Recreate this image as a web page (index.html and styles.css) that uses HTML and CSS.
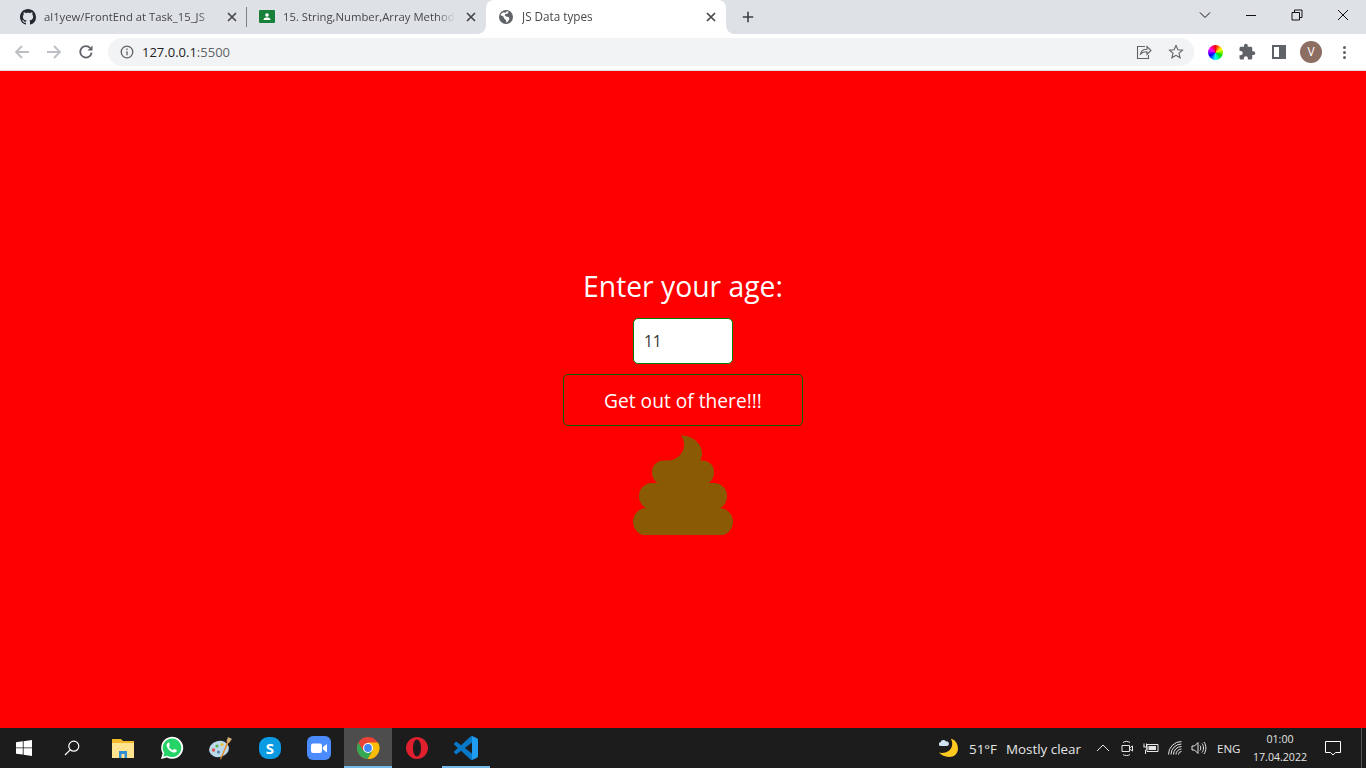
FILE: index.html
```html
<!DOCTYPE html>
<html lang="en">
<head>
    <meta charset="UTF-8">
    <meta name="viewport" content="width=device-width, initial-scale=1.0">
    <title>JS Data types</title>
    <link rel="stylesheet" href="styles.css">
</head>
<body>
    <!-- Tab strip -->
    <div class="tabstrip">
        <div class="tab">
            <svg class="favicon" viewBox="0 0 16 16"><path fill="#24292f" d="M8 0C3.58 0 0 3.58 0 8c0 3.54 2.29 6.53 5.47 7.59.4.07.55-.17.55-.38 0-.19-.01-.82-.01-1.49-2.01.37-2.53-.49-2.69-.94-.09-.23-.48-.94-.82-1.13-.28-.15-.68-.52-.01-.53.63-.01 1.08.58 1.23.82.72 1.21 1.87.87 2.33.66.07-.52.28-.87.51-1.07-1.78-.2-3.64-.89-3.64-3.95 0-.87.31-1.59.82-2.15-.08-.2-.36-1.02.08-2.12 0 0 .67-.21 2.2.82.64-.18 1.32-.27 2-.27.68 0 1.36.09 2 .27 1.53-1.04 2.2-.82 2.2-.82.44 1.1.16 1.92.08 2.12.51.56.82 1.27.82 2.15 0 3.07-1.87 3.75-3.65 3.95.29.25.54.73.54 1.48 0 1.07-.01 1.93-.01 2.2 0 .21.15.46.55.38A8.013 8.013 0 0016 8c0-4.42-3.58-8-8-8z"/></svg>
            <span class="tab-title">al1yew/FrontEnd at Task_15_JS</span>
            <svg class="tab-close" viewBox="0 0 16 16"><path d="M4 4l8 8M12 4l-8 8"/></svg>
        </div>
        <div class="tab-sep"></div>
        <div class="tab">
            <svg class="favicon" viewBox="0 0 16 16"><rect y="1" width="16" height="13" rx="1" fill="#188038"/><circle cx="8" cy="6" r="1.8" fill="#fff"/><path fill="#fff" d="M4.5 11c0-1.8 1.6-2.4 3.5-2.4s3.5.6 3.5 2.4z"/></svg>
            <span class="tab-title">15. String,Number,Array Methods</span>
            <svg class="tab-close" viewBox="0 0 16 16"><path d="M4 4l8 8M12 4l-8 8"/></svg>
        </div>
        <div class="tab tab-active">
            <svg class="favicon favicon-small" viewBox="0 0 16 16"><circle cx="8" cy="8" r="8" fill="#5f6368"/><path fill="#fff" d="M2 4.5l3-2 2.5.5L9 1.5l2 .5-1 2-2.5.5L6.5 6 8 7.5l3 .5 1 2-2 3.5-1.5 1-.5-3-2-1.5-1-2.5L2 6z"/></svg>
            <span class="tab-title">JS Data types</span>
            <svg class="tab-close" viewBox="0 0 16 16"><path d="M4 4l8 8M12 4l-8 8"/></svg>
        </div>
        <svg class="new-tab" viewBox="0 0 16 16"><path d="M8 2v12M2 8h12"/></svg>
        <div class="window-controls">
            <div class="win-btn win-btn-list"><svg viewBox="0 0 12 12"><path d="M1 3.5l5 5 5-5"/></svg></div>
            <div class="win-btn"><svg viewBox="0 0 12 12"><path d="M1 6.5h10"/></svg></div>
            <div class="win-btn"><svg viewBox="0 0 12 12"><path d="M1 3.5h7.5V11H1zM3.5 3.5V1H11v7.5H8.5"/></svg></div>
            <div class="win-btn"><svg viewBox="0 0 12 12"><path d="M1 1l10 10M11 1L1 11"/></svg></div>
        </div>
    </div>

    <!-- Toolbar -->
    <div class="toolbar">
        <svg class="nav-icon nav-off" viewBox="0 0 16 16"><path d="M15 8H2M8 2L2 8l6 6"/></svg>
        <svg class="nav-icon nav-off" viewBox="0 0 16 16"><path d="M1 8h13M8 2l6 6-6 6"/></svg>
        <svg class="nav-icon" viewBox="0 0 16 16"><path d="M13.6 8.6a5.7 5.7 0 1 1-1.4-4.6"/><path class="solid" d="M14.5 1.5v5h-5z"/></svg>
        <div class="omnibox">
            <svg class="info-icon" viewBox="0 0 14 14"><circle cx="7" cy="7" r="5.8"/><path d="M7 6.2v4M7 3.6v1.5"/></svg>
            <span class="url">127.0.0.1<span class="url-port">:5500</span></span>
            <svg class="omni-icon" viewBox="0 0 16 16"><path d="M9 2.5H1.500v12h11V11"/><path d="M4.500 10c.5-3 3-4.800 6.500-4.800V2.500l4 4-4 4V7.800c-2.500 0-5 .7-6.500 2.200z"/></svg>
            <svg class="omni-icon" viewBox="0 0 16 16"><path d="M8 1.500l1.900 4.300 4.600.4-3.500 3 1.100 4.600L8 11.400 3.900 13.800 5 9.200l-3.500-3 4.600-.4z"/></svg>
        </div>
        <div class="wheel"></div>
        <svg class="puzzle" viewBox="0 0 24 24"><path d="M20.500 11H19V7c0-1.100-.9-2-2-2h-4V3.500C13 2.120 11.880 1 10.500 1S8 2.120 8 3.500V5H4c-1.100 0-1.990.9-1.990 2v3.800H3.500c1.490 0 2.700 1.210 2.700 2.700s-1.210 2.700-2.700 2.700H2V20c0 1.100.9 2 2 2h3.800v-1.500c0-1.490 1.210-2.700 2.700-2.700 1.490 0 2.700 1.210 2.700 2.700V22H17c1.100 0 2-.9 2-2v-4h1.500c1.380 0 2.500-1.120 2.500-2.500S21.880 11 20.500 11z"/></svg>
        <div class="side-panel"><span></span></div>
        <div class="avatar">V</div>
        <div class="menu-dots"><span></span><span></span><span></span></div>
    </div>

    <main class="page">
        <h1 class="age-title">Enter your age:</h1>
        <input class="age-input" type="text" value="11">
        <button class="age-button" type="button">Get out of there!!!</button>
        <svg class="poo" viewBox="0 0 100 100">
            <rect x="0" y="73" width="100" height="27.500" rx="13.700"/>
            <rect x="6" y="48" width="88" height="26.500" rx="13"/>
            <rect x="19" y="25.500" width="62" height="24" rx="11.500"/>
            <path d="M48 .5C60 .5 69 9 69 18c0 3-.7 5.500-2 8H33.500C43 25.700 51 19 51 10c0-3.500-1-6.500-3-9.500z"/>
        </svg>
    </main>

    <!-- Windows taskbar -->
    <div class="taskbar">
        <div class="task-start">
            <svg viewBox="0 0 16 16" class="win-logo"><path d="M0 2.300l6.800-1v6.200H0zM7.600 1.200L16 0v7.500H7.600zM0 8.300h6.800v6.300L0 13.700zM7.600 8.300H16V16l-8.400-1.200z"/></svg>
        </div>
        <div class="task-start">
            <svg viewBox="0 0 16 16" class="search-icon"><circle cx="9.800" cy="6.200" r="5"/><path d="M6.200 9.800L1 15"/></svg>
        </div>
        <div class="task-apps">
            <div class="app"><svg viewBox="0 0 24 24"><path fill="#f2b92b" d="M1 3h9l2 2h11v17H1z"/><path fill="#ffe38f" d="M1 7h22v15H1z"/><path fill="#2f8ed6" d="M8 15h8v7h-2.500v-4h-3v4H8z"/></svg></div>
            <div class="app"><svg viewBox="0 0 24 24"><path fill="#fff" d="M1 23l1.600-5.800A11 11 0 1 1 7 21.500z"/><path fill="#25d366" d="M3.300 20.700l1-3.700A9.300 9.300 0 1 1 7.300 19.800z"/><path fill="#fff" d="M8.600 6.600c-.4 0-1 .2-1.400.9-.8 1.300-.7 2.900.5 4.700 1.400 2.100 3 3.500 5.300 4.200 1.500.5 2.900 0 3.500-1 .3-.5.300-1.100.2-1.300l-2.300-1.200c-.2-.1-.4 0-.5.100l-.8 1c-.2.2-.3.200-.6.100-1.500-.7-2.700-1.800-3.500-3.200-.1-.2 0-.4.100-.5l.6-.8c.1-.2.1-.3 0-.5L9.300 7c-.2-.4-.4-.4-.7-.4z"/></svg></div>
            <div class="app"><svg viewBox="0 0 24 24"><ellipse cx="10" cy="13" rx="10" ry="8" transform="rotate(-15 10 13)" fill="#bcd9ea"/><circle cx="4.500" cy="14" r="1.700" fill="#e0504a"/><circle cx="8" cy="10" r="1.600" fill="#58b04c"/><circle cx="13" cy="8.500" r="1.600" fill="#e8c02c"/><circle cx="9.500" cy="16" r="1.500" fill="#4f7fa8"/><path fill="#e38a2c" d="M18.500 5l1.500 1-8 17.500-1-.5z"/><path fill="#d8b070" d="M19 1l4 2-3 4-2.500-1.500z"/></svg></div>
            <div class="app"><svg viewBox="0 0 24 24"><rect x="1" y="1" width="22" height="22" rx="9" fill="#0b9be3"/><text class="skype-s" x="12" y="17.500" text-anchor="middle">S</text></svg></div>
            <div class="app"><svg viewBox="0 0 24 24"><rect width="24" height="24" rx="6" fill="#4a8cff"/><rect x="4" y="7.500" width="11" height="9.500" rx="2" fill="#fff"/><path fill="#fff" d="M16 11l4-3v8.500l-4-3z"/></svg></div>
            <div class="app app-active app-running"><svg viewBox="0 0 24 24"><circle cx="12" cy="12" r="11" fill="#ea4335"/><path fill="#fbbc04" d="M12 6.500h10a11 11 0 0 1-10.500 16.500l5-8.500z"/><path fill="#34a853" d="M2.400 6.500A11 11 0 0 0 11.500 23l5-8.500H7.200z"/><circle cx="12" cy="12" r="5" fill="#fff"/><circle cx="12" cy="12" r="3.900" fill="#4285f4"/></svg></div>
            <div class="app"><svg viewBox="0 0 24 24"><path fill-rule="evenodd" fill="#e0202e" d="M12 1c6 0 11 5 11 11s-5 11-11 11S1 18 1 12 6 1 12 1zm0 2.500c-2.400 0-4 3.800-4 8.500s1.600 8.500 4 8.500 4-3.800 4-8.500-1.600-8.500-4-8.500z"/></svg></div>
            <div class="app app-running"><svg viewBox="0 0 24 24"><path fill="#0a78c9" d="M23.150 2.587L18.210.21a1.494 1.494 0 0 0-1.705.29l-9.460 8.630-4.120-3.128a.999.999 0 0 0-1.276.057L.327 7.261A1 1 0 0 0 .326 8.740L3.899 12 .326 15.260a1 1 0 0 0 .001 1.479L1.650 17.940a.999.999 0 0 0 1.276.057l4.120-3.128 9.460 8.630a1.492 1.492 0 0 0 1.704.29l4.942-2.377A1.500 1.500 0 0 0 24 20.060V3.939a1.500 1.500 0 0 0-.85-1.352zm-5.146 14.861L10.826 12l7.178-5.448v10.896z"/><path fill="#1f9cf0" d="M18 0l5.150 2.587A1.500 1.500 0 0 1 24 3.939V20.060a1.500 1.500 0 0 1-.85 1.352L18 24z"/></svg></div>
        </div>
        <div class="tray">
            <svg class="moon" viewBox="0 0 24 24"><path fill="#ffc91f" d="M12.800 1.900C18 3 20.700 7.500 20.700 12.800c0 5.200-4.200 9-9.800 9-4.400 0-8.400-1.800-10.900-4.800 7 1.500 13-2 14.200-7.500.6-3 0-5.500-1.400-7.600z"/><path fill="#cfe3f5" d="M1.800 9.800a2 2 0 0 1-.2-4 3.300 3.300 0 0 1 6-1 2.600 2.600 0 0 1 1.400 5z"/></svg>
            <span class="temp">51°F</span>
            <span class="weather">Mostly clear</span>
            <div class="tray-icon"><svg viewBox="0 0 16 16"><path d="M2 11l6-6 6 6"/></svg></div>
            <div class="tray-icon"><svg viewBox="0 0 16 16"><path d="M3 5.500h7.500v6H3zM10.500 8l3-2v5l-3-2M4 2.500c2-1.500 5-1.500 7 0M4 14.500c2 1.500 5 1.500 7 0"/></svg></div>
            <div class="tray-icon"><svg viewBox="0 0 16 16"><path d="M4 4.500h11v7H4zM1 7V3.500M3.500 7V3.500M.5 7h3.500v2L2.500 10v4"/><path class="solid" d="M5.500 6h7.500v4H5.500z"/></svg></div>
            <div class="tray-icon"><svg viewBox="0 0 16 16"><path d="M1.500 14.500a13 13 0 0 1 13-13M4 14.500a10.500 10.500 0 0 1 10.500-10.500M6.500 14.500a8 8 0 0 1 8-8M9 14.500a5.500 5.500 0 0 1 5.500-5.500M11.500 14.500a3 3 0 0 1 3-3"/></svg></div>
            <div class="tray-icon"><svg viewBox="0 0 16 16"><path d="M1 6h2.500L7 2.500v11L3.500 10H1zM9 5.500c1 1.500 1 3.500 0 5M11 3.500c2 2.500 2 6.500 0 9M13 2c2.500 3.500 2.500 8.500 0 12"/></svg></div>
            <span class="lang">ENG</span>
            <div class="clock"><span>01:00</span><span>17.04.2022</span></div>
            <div class="notify"><svg viewBox="0 0 18 18"><path d="M1.500 2.500h15v11h-5L9 16l-2.500-2.500h-5z"/></svg></div>
            <div class="show-desktop"></div>
        </div>
    </div>
</body>
</html>
```

FILE: styles.css
```css
* {
    box-sizing: border-box;
}

body {
    margin: 0;
    height: 100vh;
    display: flex;
    flex-direction: column;
    overflow: hidden;
    font-family: "Open Sans", "Liberation Sans", sans-serif;
    background-color: #f00;
}

svg {
    display: block;
    flex: none;
}

/* tab strip */
.tabstrip {
    height: 34px;
    padding-left: 8px;
    display: flex;
    align-items: center;
    background-color: #dee1e6;
}

.tab {
    width: 239px;
    height: 34px;
    padding: 0 7px 0 12px;
    display: flex;
    align-items: center;
    gap: 8px;
    flex: none;
}

.tab-active {
    position: relative;
    width: 240px;
    padding-left: 13px;
    background-color: #fff;
    border-radius: 8px 8px 0 0;
}

/* little curves where the active tab meets the toolbar */
.tab-active::before,
.tab-active::after {
    content: "";
    position: absolute;
    bottom: 0;
    width: 8px;
    height: 8px;
}

.tab-active::before {
    left: -8px;
    background: radial-gradient(circle at 0 0, #dee1e6 7.5px, #fff 8px);
}

.tab-active::after {
    right: -8px;
    background: radial-gradient(circle at 100% 0, #dee1e6 7.5px, #fff 8px);
}

.favicon {
    width: 16px;
    height: 16px;
}

.favicon-small {
    width: 14px;
    height: 14px;
    margin-right: 1px;
}

.tab-title {
    flex: 1;
    padding-bottom: 2px;
    overflow: hidden;
    white-space: nowrap;
    font-size: 11.3px;
    color: #45474a;
    -webkit-mask-image: linear-gradient(to left, transparent 0, #000 18px);
    mask-image: linear-gradient(to left, transparent 0, #000 18px);
}

.tab-active .tab-title {
    font-size: 11.7px;
}

.tab-close {
    width: 16px;
    height: 16px;
    fill: none;
    stroke: #45474a;
    stroke-width: 1.7;
}

.tab-sep {
    width: 1px;
    height: 20px;
    margin-left: -1px;
    background-color: #7f8388;
    flex: none;
}

.new-tab {
    width: 14px;
    height: 14px;
    margin-left: 15px;
    fill: none;
    stroke: #3c4043;
    stroke-width: 1.800;
}

.window-controls {
    margin-left: auto;
    display: flex;
    align-self: flex-start;
}

.win-btn {
    width: 46px;
    height: 29px;
    display: flex;
    align-items: center;
    justify-content: center;
}

.win-btn svg {
    width: 12px;
    height: 12px;
    fill: none;
    stroke: #111;
    stroke-width: 1;
}

/* toolbar */
.toolbar {
    height: 37px;
    padding: 0 12px 0 14px;
    display: flex;
    align-items: center;
    background-color: #fff;
    border-bottom: 1px solid #dadce0;
}

.nav-icon {
    width: 16px;
    height: 16px;
    margin-right: 16px;
    fill: none;
    stroke: #5f6368;
    stroke-width: 1.800;
}

.nav-off {
    stroke: #bcbfc3;
}

.solid {
    fill: currentColor;
    stroke: none;
}

.nav-icon .solid {
    fill: #5f6368;
}

.omnibox {
    width: 1086px;
    height: 28px;
    margin-left: -2px;
    padding: 0 10px 0 12px;
    display: flex;
    align-items: center;
    flex: none;
    border-radius: 14px;
    background-color: #f1f3f4;
}

.info-icon {
    width: 14px;
    height: 14px;
    fill: none;
    stroke: #5f6368;
    stroke-width: 1.300;
}

.url {
    margin-left: 8px;
    flex: 1;
    font-size: 13px;
    color: #202124;
}

.url-port {
    color: #5f6368;
}

.omni-icon {
    width: 16px;
    height: 16px;
    margin-left: 16px;
    fill: none;
    stroke: #5f6368;
    stroke-width: 1.100;
}

.wheel {
    width: 15px;
    height: 15px;
    margin-left: 14px;
    flex: none;
    border-radius: 50%;
    background: conic-gradient(#f00, #ff0, #0d0, #0ff, #00f, #f0f, #f00);
}

.puzzle {
    width: 18px;
    height: 18px;
    margin-left: 15px;
    fill: #5f6368;
}

.side-panel {
    width: 14px;
    height: 14px;
    margin-left: 16px;
    flex: none;
    border: 2px solid #5f6368;
    display: flex;
    justify-content: flex-end;
}

.side-panel span {
    width: 5px;
    background-color: #5f6368;
}

.avatar {
    width: 22px;
    height: 22px;
    margin-left: 14px;
    flex: none;
    border-radius: 50%;
    background-color: #8d6e63;
    color: #fff;
    font-size: 12px;
    line-height: 22px;
    text-align: center;
}

.menu-dots {
    margin-left: 21px;
    display: flex;
    flex-direction: column;
    gap: 2px;
}

.menu-dots span {
    width: 3px;
    height: 3px;
    border-radius: 50%;
    background-color: #5f6368;
}

/* page */
.page {
    flex: 1;
    display: flex;
    flex-direction: column;
    align-items: center;
    justify-content: center;
    background-color: #f00;
}

.age-title {
    margin: 0 0 8px;
    height: 46px;
    font-size: 28.300px;
    font-weight: 400;
    line-height: 44px;
    color: #fff;
}

.age-input {
    width: 100px;
    height: 46px;
    padding: 0 10px;
    border: 1px solid #008000;
    border-radius: 5px;
    background-color: #fff;
    color: #333;
    font-family: inherit;
    font-size: 15.500px;
    outline: none;
}

.age-button {
    width: 240px;
    height: 52px;
    margin: 10px 0 9px;
    padding: 1px 0 0;
    border: 1px solid #006400;
    border-radius: 5px;
    background-color: #f00;
    color: #fff;
    font-family: inherit;
    font-size: 19.200px;
}

.poo {
    width: 100px;
    height: 100px;
    fill: #8b5a05;
}

/* taskbar */
.taskbar {
    height: 40px;
    display: flex;
    background-color: #1c1c1c;
    color: #e6e6e6;
}

.task-start {
    width: 48px;
    display: flex;
    align-items: center;
    justify-content: center;
    flex: none;
}

.win-logo {
    width: 16px;
    height: 16px;
    fill: #fff;
}

.search-icon {
    width: 16px;
    height: 16px;
    fill: none;
    stroke: #fff;
    stroke-width: 1.200;
}

.task-apps {
    margin-left: 3px;
    display: flex;
    gap: 1px;
}

.app {
    width: 48px;
    display: flex;
    align-items: center;
    justify-content: center;
}

.app svg {
    width: 24px;
    height: 24px;
}

.app-active {
    background-color: #4d4d4d;
}

.app-running {
    box-shadow: inset 0 -2px 0 #76b9ed;
}

.skype-s {
    font-family: "Open Sans", sans-serif;
    font-size: 15px;
    font-weight: 700;
    fill: #fff;
}

.tray {
    margin-left: auto;
    display: flex;
    align-items: center;
    font-size: 13.400px;
}

.moon {
    width: 22px;
    height: 22px;
    margin-right: 8px;
}

.temp {
    margin: 2px 9px 0 0;
}

.weather {
    margin: 2px 10px 0 0;
}

.tray-icon {
    width: 24px;
    display: flex;
    justify-content: center;
}

.tray-icon svg {
    width: 16px;
    height: 16px;
    fill: none;
    stroke: #e6e6e6;
    stroke-width: 1;
}

.tray-icon .solid {
    fill: #e6e6e6;
}

.lang {
    margin-left: 6px;
    width: 30px;
    font-size: 11.500px;
}

.clock {
    width: 66px;
    display: flex;
    flex-direction: column;
    align-items: center;
    font-size: 10.600px;
    line-height: 18px;
}

.notify {
    width: 48px;
    padding-left: 11px;
    display: flex;
}

.notify svg {
    width: 18px;
    height: 18px;
    fill: none;
    stroke: #fff;
    stroke-width: 1;
}

.show-desktop {
    width: 5px;
    height: 40px;
    border-left: 1px solid #555;
}
```
